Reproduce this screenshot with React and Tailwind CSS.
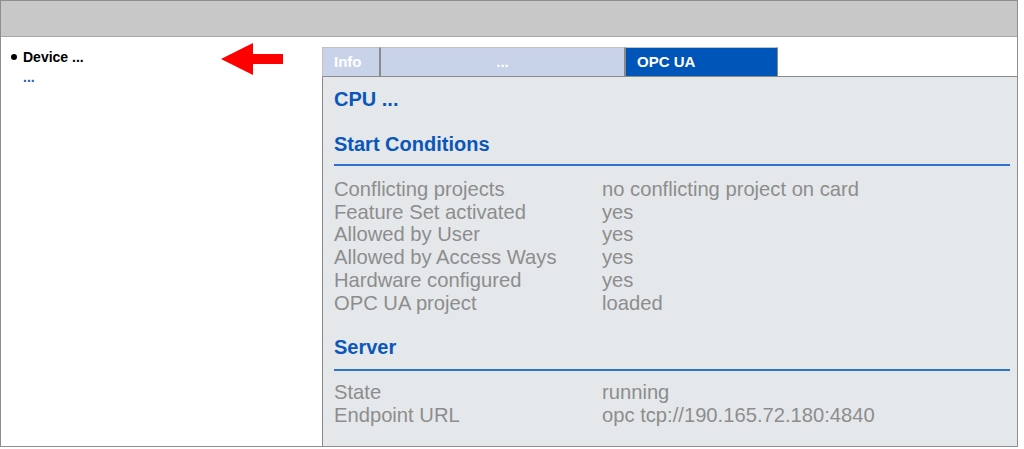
import React from "react";

const rows1 = [
  ["Conflicting projects", "no conflicting project on card"],
  ["Feature Set activated", "yes"],
  ["Allowed by User", "yes"],
  ["Allowed by Access Ways", "yes"],
  ["Hardware configured", "yes"],
  ["OPC UA project", "loaded"],
];
const rows2 = [
  ["State", "running"],
  ["Endpoint URL", "opc tcp://190.165.72.180:4840"],
];

function Rows({ rows }) {
  return (
    <div className="flex flex-col">
      {rows.map(([k, v]) => (
        <div key={k} className="flex h-[22.75px] items-center text-[20.2px] leading-[22px] text-[#8d8d8d]">
          <span className="w-[268px]">{k}</span>
          <span>{v}</span>
        </div>
      ))}
    </div>
  );
}

export default function App() {
  return (
    <div
      className="relative w-[1018px] h-[447px] border border-[#8e8e8e] bg-white flex flex-col overflow-hidden"
      style={{ fontFamily: '"Liberation Sans", Arial, sans-serif' }}
    >
      <div className="h-[36px] shrink-0 bg-[#c8c8c8] border-b border-[#a8a8a8]" />
      <div className="flex flex-1 min-h-0">
        <div className="w-[321px] shrink-0 pl-[10px] pt-[11px]">
          <div className="flex items-center h-[18px]">
            <span className="w-[12px] flex items-center">
              <span className="block w-[6px] h-[6px] rounded-full bg-black" />
            </span>
            <span className="text-[14px] font-bold text-black leading-[18px]">Device ...</span>
          </div>
          <div className="pl-[12px] mt-[2px] text-[14px] font-bold text-[#1a5dc0] leading-[18px]">...</div>
        </div>
        <div className="flex-1 flex flex-col pt-[10px] min-w-0">
          <div className="flex h-[30px] shrink-0">
            <div className="w-[59px] bg-[#c8d3ea] border-t border-l border-[#c0c0c0] border-r-2 border-r-[#8a8a8a] border-b border-b-[#8a8a8a] flex items-center pl-[11px] text-[15px] font-bold text-white">
              Info
            </div>
            <div className="w-[245px] bg-[#c8d3ea] border-t border-[#c0c0c0] border-r-2 border-r-[#8a8a8a] border-b border-b-[#8a8a8a] flex items-center justify-center text-[15px] font-bold text-white">
              ...
            </div>
            <div className="w-[152px] bg-[#0055b8] border-t border-[#c0c0c0] border-r border-r-[#8a8a8a] border-b border-b-[#8a8a8a] flex items-center pl-[11px] text-[15px] font-bold text-white">
              OPC UA
            </div>
            <div className="flex-1 border-b border-[#8a8a8a]" />
          </div>
          <div className="flex-1 bg-[#e4e8eb] border-l border-[#8a8a8a] pl-[11px] pr-[7px]">
            <div className="mt-[10px] h-[24px] flex items-center text-[20px] font-bold text-[#0b57b9]">CPU ...</div>
            <div className="mt-[21px] h-[24px] flex items-center text-[20px] font-bold text-[#0b57b9]">Start Conditions</div>
            <div className="mt-[8px] h-[2px] bg-[#2f72cf]" />
            <div className="mt-[11.5px]">
              <Rows rows={rows1} />
            </div>
            <div className="mt-[21px] h-[24px] flex items-center text-[20px] font-bold text-[#0b57b9]">Server</div>
            <div className="mt-[10px] h-[2px] bg-[#2f72cf]" />
            <div className="mt-[10px]">
              <Rows rows={rows2} />
            </div>
          </div>
        </div>
      </div>
      <svg className="absolute left-[219px] top-[42px]" width="64" height="33" viewBox="0 0 64 33">
        <polygon points="1,16 33,0 33,11 63,11 63,21 33,21 33,32" fill="#ff0000" />
      </svg>
    </div>
  );
}
